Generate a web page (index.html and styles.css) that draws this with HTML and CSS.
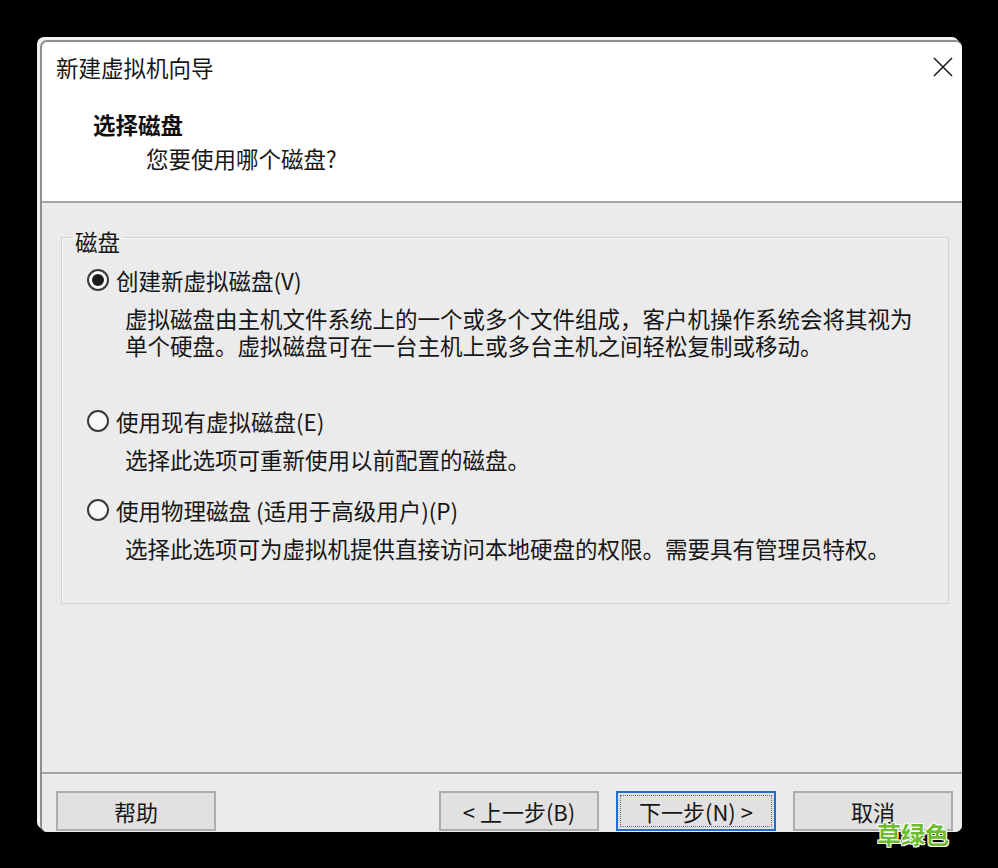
FILE: index.html
```html
<!DOCTYPE html>
<html lang="zh-CN">

<head>
    <meta charset="UTF-8" />
    <meta name="viewport" content="width=device-width, initial-scale=1.0" />
    <title>新建虚拟机向导</title>
    <link rel="stylesheet" href="styles.css">
</head>

<body>
    <div class="window">
        <!-- Title bar -->
        <div class="titlebar">
            <span class="title">新建虚拟机向导</span>
            <button class="btn-close" aria-label="关闭">
                <svg width="20" height="20" viewBox="0 0 20 20">
                    <path d="M1 1 L19 19 M19 1 L1 19" stroke="#1f1f1f" stroke-width="1.6" fill="none" />
                </svg>
            </button>
        </div>

        <!-- Step header -->
        <div class="header">
            <div class="header-title">选择磁盘</div>
            <div class="header-sub">您要使用哪个磁盘?</div>
        </div>

        <!-- Options -->
        <div class="content">
            <fieldset class="group">
                <legend>磁盘</legend>
                <div class="options">
                    <div class="option">
                        <span class="radio checked"></span>
                        <span>创建新虚拟磁盘(V)</span>
                    </div>
                    <div class="desc wide">
                        <div>虚拟磁盘由主机文件系统上的一个或多个文件组成，客户机操作系统会将其视为</div>
                        <div>单个硬盘。虚拟磁盘可在一台主机上或多台主机之间轻松复制或移动。</div>
                    </div>

                    <div class="option">
                        <span class="radio"></span>
                        <span>使用现有虚拟磁盘(E)</span>
                    </div>
                    <div class="desc">选择此选项可重新使用以前配置的磁盘。</div>

                    <div class="option">
                        <span class="radio"></span>
                        <span>使用物理磁盘 (适用于高级用户)(P)</span>
                    </div>
                    <div class="desc">选择此选项可为虚拟机提供直接访问本地硬盘的权限。需要具有管理员特权。</div>
                </div>
            </fieldset>
        </div>

        <!-- Buttons -->
        <div class="footer">
            <button class="btn">帮助</button>
            <div class="nav">
                <button class="btn">&lt; 上一步(B)</button>
                <button class="btn default">下一步(N) &gt;</button>
                <button class="btn">取消</button>
            </div>
        </div>
    </div>

    <div class="watermark">草绿色</div>
</body>

</html>
```

FILE: styles.css
```css
* {
    box-sizing: border-box;
}

html,
body {
    margin: 0;
    padding: 0;
    background: #000000;
    width: 998px;
    height: 868px;
    overflow: hidden;
    font-family: "Noto Sans CJK SC", "Noto Sans", sans-serif;
    color: #161616;
    position: relative;
}

.window {
    margin: 40px 0 0 40px;
    width: 922px;
    height: 792px;
    background: #ffffff;
    border-top: 2px solid #8e8e8e;
    border-left: 2px solid #8e8e8e;
    border-radius: 7px;
    box-shadow: -3px -3px 0 #f2f2f2;
    overflow: hidden;
    display: flex;
    flex-direction: column;
}

.titlebar {
    height: 54px;
    padding: 0 9px 4px 14px;
    display: flex;
    align-items: center;
    justify-content: space-between;
    font-size: 22.5px;
}

.btn-close {
    background: none;
    border: none;
    padding: 0;
    width: 20px;
    height: 20px;
    cursor: pointer;
}

.btn-close svg {
    display: block;
}

.header {
    height: 107px;
    padding: 13px 0 0 51px;
    border-bottom: 2px solid #a5a5a5;
    font-size: 22.5px;
}

.header-title {
    line-height: 30px;
    font-weight: bold;
    color: #0e0e0e;
}

.header-sub {
    margin-top: 4px;
    padding-left: 53px;
    line-height: 30px;
}

.content {
    flex: 1;
    background: #ebebeb;
    padding: 18px 13px 0 19px;
}

.group {
    margin: 0;
    padding: 0;
    min-width: 0;
    border: 1px solid #d2d2d2;
    box-shadow: inset 1px 1px 0 #f7f7f7;
    font-size: 22.5px;
}

.group legend {
    margin-left: 11px;
    padding: 7px 2px 0;
    line-height: 26px;
}

.options {
    padding: 11px 0 41px 25px;
}

.option {
    height: 30px;
    display: flex;
    align-items: center;
    gap: 7px;
}

.option + .desc {
    margin-top: 10px;
}

.desc {
    padding-left: 38px;
    line-height: 27px;
    margin-bottom: 22px;
}

.desc.wide {
    margin-bottom: 47px;
}

.desc:last-child {
    margin-bottom: 0;
}

.radio {
    width: 22px;
    height: 22px;
    border: 2px solid #3a3a3a;
    border-radius: 50%;
    background: #fafafa;
    display: flex;
    align-items: center;
    justify-content: center;
    flex-shrink: 0;
}

.radio.checked::after {
    content: "";
    width: 12px;
    height: 12px;
    border-radius: 50%;
    background: #1c1c1c;
}

.footer {
    height: 60px;
    border-top: 2px solid #a5a5a5;
    background: #ebebeb;
    padding: 17px 9px 0 14px;
    display: flex;
    justify-content: space-between;
    align-items: flex-start;
}

.nav {
    display: flex;
    gap: 17px;
}

.btn {
    width: 160px;
    height: 40px;
    background: #e1e1e1;
    border: 2px solid #adadad;
    font-family: inherit;
    font-size: 22px;
    color: #161616;
    padding: 0;
    cursor: pointer;
}

.btn.default {
    border-color: #1f6fd0;
    outline: 1px dotted #6a6a6a;
    outline-offset: -5px;
}

.watermark {
    position: absolute;
    left: 877px;
    top: 816px;
    font-size: 24px;
    font-weight: bold;
    color: #6dbb2f;
    text-shadow: 1px 1px 0 #fff, -1px -1px 0 #fff, 1px -1px 0 #fff, -1px 1px 0 #fff;
}
```
